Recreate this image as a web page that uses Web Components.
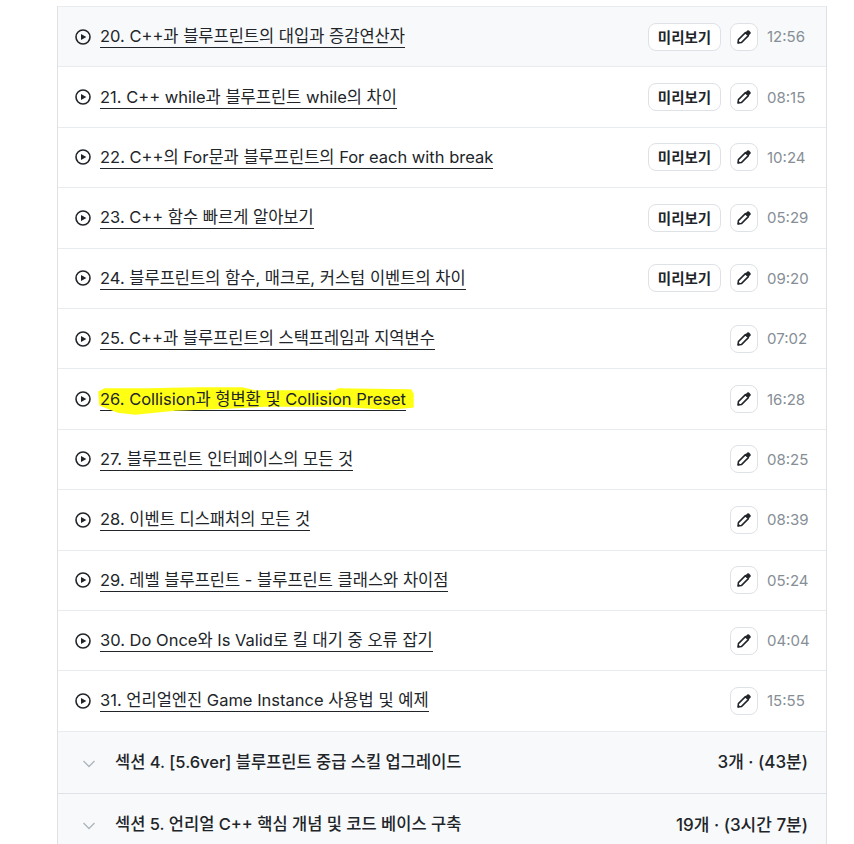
<!DOCTYPE html>
<html lang="ko">
<head>
<meta charset="utf-8">
<title>커리큘럼</title>
<style>
    html, body { margin: 0; background: #fff; }
    body {
        height: 844px;
        overflow: hidden;
        font-family: Inter, "Noto Sans CJK KR", sans-serif;
    }
</style>
</head>
<body>
<curriculum-list>
    <lecture-row active preview title-text="20. C++과 블루프린트의 대입과 증감연산자" time="12:56"></lecture-row>
    <lecture-row preview title-text="21. C++ while과 블루프린트 while의 차이" time="08:15"></lecture-row>
    <lecture-row preview title-text="22. C++의 For문과 블루프린트의 For each with break" time="10:24"></lecture-row>
    <lecture-row preview title-text="23. C++ 함수 빠르게 알아보기" time="05:29"></lecture-row>
    <lecture-row preview title-text="24. 블루프린트의 함수, 매크로, 커스텀 이벤트의 차이" time="09:20"></lecture-row>
    <lecture-row title-text="25. C++과 블루프린트의 스택프레임과 지역변수" time="07:02"></lecture-row>
    <lecture-row marked title-text="26. Collision과 형변환 및 Collision Preset" time="16:28"></lecture-row>
    <lecture-row title-text="27. 블루프린트 인터페이스의 모든 것" time="08:25"></lecture-row>
    <lecture-row title-text="28. 이벤트 디스패처의 모든 것" time="08:39"></lecture-row>
    <lecture-row title-text="29. 레벨 블루프린트 - 블루프린트 클래스와 차이점" time="05:24"></lecture-row>
    <lecture-row title-text="30. Do Once와 Is Valid로 킬 대기 중 오류 잡기" time="04:04"></lecture-row>
    <lecture-row title-text="31. 언리얼엔진 Game Instance 사용법 및 예제" time="15:55"></lecture-row>
    <section-row title-text="섹션 4. [5.6ver] 블루프린트 중급 스킬 업그레이드" info="3개 · (43분)"></section-row>
    <section-row title-text="섹션 5. 언리얼 C++ 핵심 개념 및 코드 베이스 구축" info="19개 · (3시간 7분)"></section-row>
</curriculum-list>

<script>
// the list box with its side borders
class CurriculumList extends HTMLElement {
    constructor() {
        super();
        this.attachShadow({ mode: 'open' });
        this.shadowRoot.innerHTML = `
            <style>
                :host {
                    display: block;
                    width: 770px;
                    margin: 6px 0 0 57px;
                    box-sizing: border-box;
                    border-left: 1px solid #dee2e6;
                    border-right: 1px solid #dee2e6;
                    border-top: 1px solid #e9ecef;
                }
            </style>
            <slot></slot>
        `;
    }
}

const playIcon = `
    <svg width="16" height="16" viewBox="0 0 16 16">
        <circle cx="8" cy="8" r="7" fill="none" stroke="#212529" stroke-width="1.6"/>
        <path d="M6 4.9 L11.4 8 L6 11.1 Z" fill="#212529"/>
    </svg>`;

const pencilIcon = `
    <svg width="16" height="16" viewBox="0 0 16 16">
        <path d="M11.4 1.4 Q12.2 0.9 13 1.6 L14.4 3 Q15.1 3.8 14.6 4.6 L12.8 6.4 L9.6 3.2 Z" fill="#212529"/>
        <path d="M9.4 3.6 L12.4 6.6 L5.4 13.6 L2 14 L2.4 10.6 Z" fill="none" stroke="#212529" stroke-width="1.5" stroke-linejoin="round"/>
        <path d="M1.6 14.4 L2.2 11.4 L4.6 13.8 Z" fill="#212529"/>
    </svg>`;

class LectureRow extends HTMLElement {
    constructor() {
        super();
        this.attachShadow({ mode: 'open' });
    }

    connectedCallback() {
        let preview = this.hasAttribute('preview')
            ? '<span class="preview">미리보기</span>' : '';
        // hand drawn highlighter stroke behind the title
        let marker = this.hasAttribute('marked') ? `
            <svg class="marker" width="318" height="32" viewBox="0 0 318 32">
                <path d="M1 6 L7 3 L50 3 L100 2 L144 2 L157 5 L237 5 L240 3 L313 4 L315 8 L315 21 L290 23 L240 20 L167 20 L130 22 L77 24 L37 28 L20 26 L2 19 Z" fill="#ffff14" stroke="#ffff14" stroke-width="1.5" stroke-linejoin="round"/>
            </svg>` : '';
        this.shadowRoot.innerHTML = `
            <style>
                :host {
                    display: flex;
                    align-items: center;
                    box-sizing: border-box;
                    height: 60.4px;
                    padding: 0 18px 0 17px;
                    border-bottom: 1px solid #e9ecef;
                    background: #fff;
                    color: #212529;
                }
                :host([active]) { background: #f8f9fa; }
                .play { display: flex; margin-right: 9px; }
                .title {
                    position: relative;
                    font-size: 16.5px;
                    line-height: 22px;
                    border-bottom: 1px solid #212529;
                    white-space: nowrap;
                }
                .title span { position: relative; }
                .marker {
                    position: absolute;
                    left: -2px;
                    top: -2px;
                }
                .side {
                    margin-left: auto;
                    display: flex;
                    align-items: center;
                }
                .preview {
                    box-sizing: border-box;
                    height: 28px;
                    width: 73px;
                    margin-right: 9px;
                    padding-bottom: 1px;
                    display: flex;
                    align-items: center;
                    justify-content: center;
                    background: #fff;
                    border: 1px solid #dee2e6;
                    border-radius: 8px;
                    font-size: 14.5px;
                    font-weight: 700;
                }
                .edit {
                    box-sizing: border-box;
                    width: 28px;
                    height: 28px;
                    display: flex;
                    align-items: center;
                    justify-content: center;
                    background: #fff;
                    border: 1px solid #dee2e6;
                    border-radius: 8px;
                }
                .time {
                    width: 41px;
                    margin-left: 9px;
                    font-size: 15px;
                    color: #868e96;
                }
            </style>
            <span class="play">${playIcon}</span>
            <span class="title">${marker}<span>${this.getAttribute('title-text')}</span></span>
            <div class="side">
                ${preview}
                <span class="edit">${pencilIcon}</span>
                <span class="time">${this.getAttribute('time')}</span>
            </div>
        `;
    }
}

class SectionRow extends HTMLElement {
    constructor() {
        super();
        this.attachShadow({ mode: 'open' });
    }

    connectedCallback() {
        this.shadowRoot.innerHTML = `
            <style>
                :host {
                    display: flex;
                    align-items: center;
                    box-sizing: border-box;
                    height: 62.5px;
                    padding: 0 18px 3px 24px;
                    border-bottom: 1px solid #dee2e6;
                    background: #f8f9fa;
                    color: #212529;
                    font-size: 16.5px;
                    font-weight: 500;
                }
                svg { margin: 6px 19px 0 0; flex: none; }
                .info { margin-left: auto; font-size: 17px; }
            </style>
            <svg width="14" height="14" viewBox="0 0 14 14">
                <path d="M1.5 4 L7 9.5 L12.5 4" fill="none" stroke="#adb5bd" stroke-width="1.3"/>
            </svg>
            <span>${this.getAttribute('title-text')}</span>
            <span class="info">${this.getAttribute('info')}</span>
        `;
    }
}

customElements.define('curriculum-list', CurriculumList);
customElements.define('lecture-row', LectureRow);
customElements.define('section-row', SectionRow);
</script>
</body>
</html>
